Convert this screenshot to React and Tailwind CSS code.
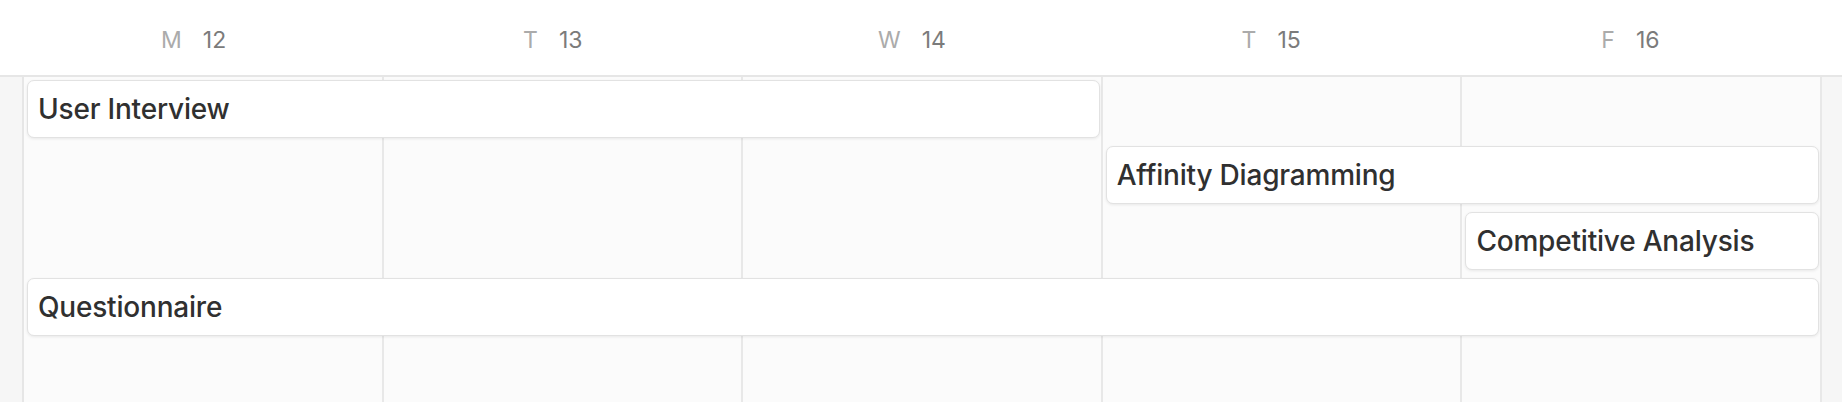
const days = [
  { letter: "M", num: 12 },
  { letter: "T", num: 13 },
  { letter: "W", num: 14 },
  { letter: "T", num: 15 },
  { letter: "F", num: 16 },
];

const EventCard = ({ title, className }) => (
  <div
    className={`mx-[3px] flex items-center rounded-[7px] border border-[#e2e2e2] bg-white pl-[10px] shadow-[0_1px_3px_rgba(0,0,0,0.08)] ${className}`}
  >
    <span className="text-[28px] font-medium text-[#303030] tracking-[-0.2px]">{title}</span>
  </div>
);

const App = () => {
  return (
    <div className="flex h-[402px] w-[1842px] flex-col overflow-hidden bg-white font-['Inter','Noto_Sans',sans-serif]">
      <div className="grid h-[77px] shrink-0 grid-cols-5 border-b-2 border-[#e6e6e6] pl-[14px] pr-[32px]">
        {days.map((d) => (
          <div key={d.num} className="flex items-center justify-center gap-[21px] pt-[6px] text-[23px]">
            <span className="text-[#ababab]">{d.letter}</span>
            <span className="text-[#7b7b7b]">{d.num}</span>
          </div>
        ))}
      </div>

      <div className="flex flex-1">
        <div className="w-[24px] shrink-0 border-r-2 border-[#e6e6e6] bg-[#f6f6f6]" />
        <div className="grid w-[1798px] shrink-0 grid-cols-5 grid-rows-[58px_58px_58px_58px_1fr] gap-y-[8px] bg-[#fbfbfb] pt-[3px]">
          {days.map((d, i) => (
            <div
              key={d.num}
              className={`row-start-1 row-end-6 -mt-[3px] border-r-2 border-[#e8e8e8] ${
                ["col-start-1", "col-start-2", "col-start-3", "col-start-4", "col-start-5"][i]
              }`}
            />
          ))}
          <EventCard title="User Interview" className="col-start-1 col-end-4 row-start-1" />
          <EventCard title="Affinity Diagramming" className="col-start-4 col-end-6 row-start-2" />
          <EventCard title="Competitive Analysis" className="col-start-5 col-end-6 row-start-3" />
          <EventCard title="Questionnaire" className="col-start-1 col-end-6 row-start-4" />
        </div>
        <div className="flex-1 bg-[#f6f6f6]" />
      </div>
    </div>
  );
};

export default App;
